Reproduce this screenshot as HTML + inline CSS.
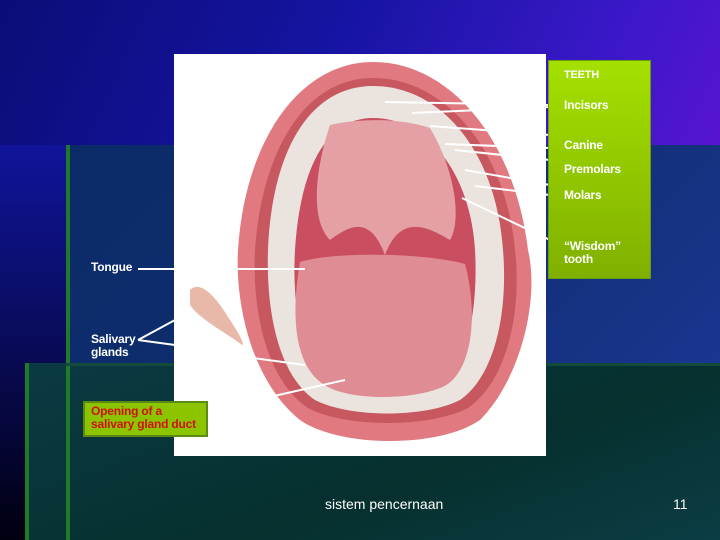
<!DOCTYPE html>
<html><head><style>
*{margin:0;padding:0}
body{width:720px;height:540px;overflow:hidden;position:relative;font-family:"Liberation Sans",Arial,sans-serif;
background:linear-gradient(115deg,#0c0c78 0%,#1414a0 35%,#3a18c8 65%,#7a10d8 100%);}
.abs{position:absolute}
.lbl{position:absolute;color:#fff;font-size:12px;font-weight:bold;line-height:13px;letter-spacing:-0.2px}
</style></head><body>
<div class="abs" style="left:0;top:145px;width:66px;height:395px;background:linear-gradient(180deg,#10149a 0%,#0a0c60 45%,#000010 100%)"></div>
<div class="abs" style="left:66px;top:145px;width:654px;height:218px;background:linear-gradient(135deg,#0b2a66,#0e2e70 50%,#1a3590)"></div>
<div class="abs" style="left:25px;top:363px;width:695px;height:177px;background:linear-gradient(160deg,#0a3a44,#06302e 60%,#0b3d45)"></div>
<div class="abs" style="left:66px;top:145px;width:4px;height:395px;background:#1f7a2a"></div>
<div class="abs" style="left:25px;top:363px;width:4px;height:177px;background:#1f7a2a"></div>
<div class="abs" style="left:66px;top:363px;width:654px;height:3px;background:#134a3a"></div>

<svg class="abs" style="left:0;top:0" width="720" height="540">
<rect x="174" y="54" width="372" height="402" fill="#fff"/>
<path d="M373 62 C300 62 245 140 238 250 C235 300 250 380 300 420 C340 448 440 448 480 420 C520 380 540 300 528 250 C515 140 450 62 373 62Z" fill="#e07a80"/>
<path d="M373 78 C305 78 262 150 255 250 C252 310 266 380 308 408 C345 428 430 428 468 408 C508 380 522 310 515 250 C506 150 445 78 373 78Z" fill="#c85860"/>
<path d="M373 86 C310 86 272 150 268 250 C266 310 278 375 315 400 C350 418 425 418 460 400 C496 375 508 310 503 250 C496 150 440 86 373 86Z" fill="#ebe4de"/>
<path d="M373 118 C325 118 300 170 295 250 C292 300 300 365 330 385 C360 400 410 400 440 385 C470 365 478 300 475 250 C470 170 425 118 373 118Z" fill="#c84e60"/>
<path d="M330 125 C360 118 400 118 430 128 C455 170 462 220 450 240 C425 225 400 215 385 255 C370 215 350 225 330 240 C310 220 315 170 330 125Z" fill="#e4a0a4"/>
<path d="M300 262 C330 252 420 252 465 264 C480 320 470 378 440 388 C410 400 355 400 330 388 C295 372 290 320 300 262Z" fill="#e08c94"/>
<path d="M190 290 C200 280 215 295 230 320 C240 335 245 345 242 345 C230 335 200 320 190 305Z" fill="#e8b8a8"/>
<g stroke="#fff" stroke-width="2">
<line x1="138" y1="269" x2="305" y2="269"/>
<line x1="138" y1="340" x2="175" y2="320"/><line x1="138" y1="340" x2="175" y2="345"/>
<line x1="246" y1="357" x2="305" y2="365"/><line x1="265" y1="398" x2="345" y2="380"/>
<line x1="550" y1="105" x2="385" y2="102"/><line x1="550" y1="107" x2="412" y2="113"/>
<line x1="550" y1="135" x2="430" y2="126"/><line x1="550" y1="148" x2="445" y2="144"/>
<line x1="550" y1="160" x2="455" y2="150"/><line x1="550" y1="185" x2="465" y2="170"/>
<line x1="550" y1="195" x2="475" y2="186"/><line x1="550" y1="240" x2="462" y2="198"/>
</g>
</svg>

<div class="abs" style="left:548px;top:60px;width:101px;height:217px;background:linear-gradient(180deg,#a4e000,#80b000);border:1px solid #6a9a10"></div>
<div class="lbl" style="left:564px;top:69px;font-size:11px">TEETH</div>
<div class="lbl" style="left:564px;top:99px">Incisors</div>
<div class="lbl" style="left:564px;top:139px">Canine</div>
<div class="lbl" style="left:564px;top:163px">Premolars</div>
<div class="lbl" style="left:564px;top:189px">Molars</div>
<div class="lbl" style="left:564px;top:240px">“Wisdom”<br>tooth</div>
<div class="lbl" style="left:91px;top:261px">Tongue</div>
<div class="lbl" style="left:91px;top:333px">Salivary<br>glands</div>
<div class="abs" style="left:83px;top:401px;width:121px;height:32px;background:#8cc400;border:2px solid #5a8a10"></div>
<div class="lbl" style="left:91px;top:405px;color:#d01010">Opening of a<br>salivary gland duct</div>
<div class="abs" style="left:325px;top:496px;color:#fff;font-size:14px">sistem pencernaan</div>
<div class="abs" style="left:673px;top:496px;color:#fff;font-size:14px">11</div>
</body></html>
